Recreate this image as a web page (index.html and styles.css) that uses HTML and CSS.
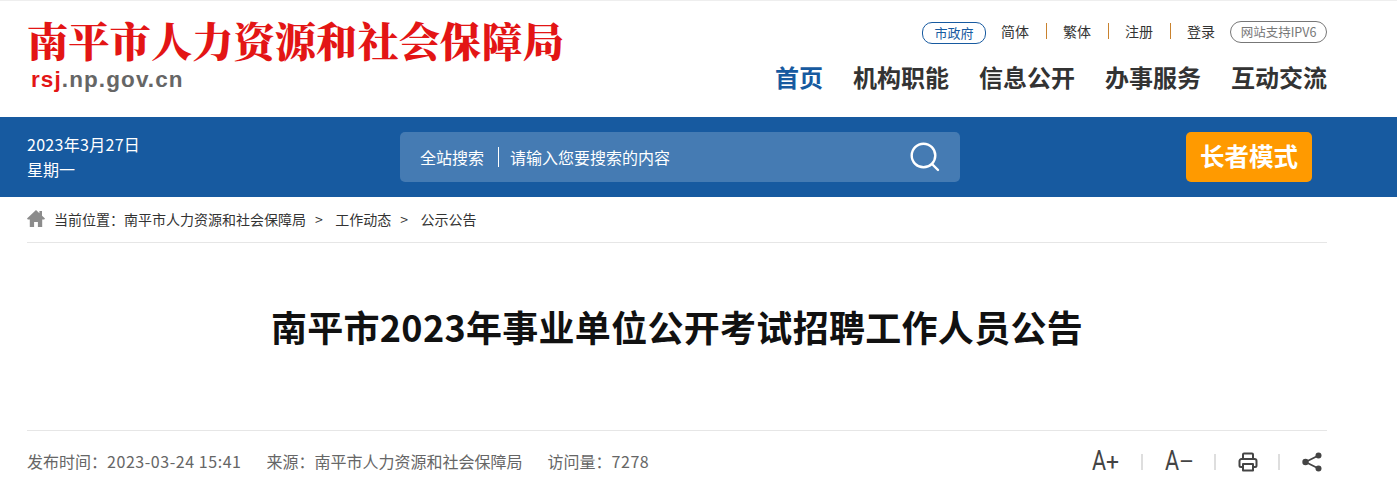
FILE: index.html
```html
<!DOCTYPE html>
<html lang="zh-CN">
<head>
<meta charset="utf-8">
<title>南平市2023年事业单位公开考试招聘工作人员公告</title>
<link rel="stylesheet" href="styles.css">
</head>
<body>
<header class="head wrap">
  <div class="logo">
    <div class="logo-cn">南平市人力资源和社会保障局</div>
    <div class="logo-en"><span class="red">rsj</span>.np.gov.cn</div>
  </div>
  <div class="head-right">
    <div class="tools">
      <a class="pill pill-blue">市政府</a>
      <a class="tool tool-line">简体</a>
      <a class="tool tool-line">繁体</a>
      <a class="tool tool-line">注册</a>
      <a class="tool">登录</a>
      <a class="pill pill-gray">网站支持IPV6</a>
    </div>
    <nav class="nav">
      <a class="active">首页</a>
      <a>机构职能</a>
      <a>信息公开</a>
      <a>办事服务</a>
      <a>互动交流</a>
    </nav>
  </div>
</header>
<section class="band">
  <div class="wrap band-in">
    <div class="date">
      <div class="date-line">2023年3月27日</div>
      <div>星期一</div>
    </div>
    <div class="search">
      <span class="search-label">全站搜索</span>
      <span class="search-hint">请输入您要搜索的内容</span>
      <svg class="search-icon" viewBox="0 0 30 30" width="30" height="30" fill="none" stroke="#fff" stroke-width="2.4" stroke-linecap="round"><circle cx="13.500" cy="13.500" r="11.800"/><path d="M22 22l6 6"/></svg>
    </div>
    <a class="elder">长者模式</a>
  </div>
</section>
<div class="wrap crumbs">
  <svg class="home" viewBox="0 0 18 17" width="18" height="17" fill="#8c8c8c"><path d="M9 0L0 8.600l.8.900h2V17h4.300v-5h3.800v5h4.300V9.500h2l.8-.9-3-2.900V1h-2.600v2.300z"/></svg>
  <span>当前位置：南平市人力资源和社会保障局</span>
  <span class="sep">&gt;</span>
  <span>工作动态</span>
  <span class="sep">&gt;</span>
  <span>公示公告</span>
</div>
<main class="wrap">
  <h1 class="title">南平市2023年事业单位公开考试招聘工作人员公告</h1>
  <div class="meta">
    <div class="meta-left">
      <span>发布时间：<span class="stamp">2023-03-24 15:41</span></span>
      <span>来源：南平市人力资源和社会保障局</span>
      <span>访问量：<span class="stamp">7278</span></span>
    </div>
    <div class="meta-right">
      <span class="fs"><b>A</b><small>+</small></span>
      <i class="bar"></i>
      <span class="fs"><b>A</b><small>–</small></span>
      <i class="bar"></i>
      <svg class="print" viewBox="0 0 20 20" width="20" height="20" fill="none" stroke="#444" stroke-width="2" stroke-linejoin="round"><path d="M5 7V2.500a1 1 0 0 1 1-1h8a1 1 0 0 1 1 1V7"/><path d="M5 15H3a1.500 1.500 0 0 1-1.500-1.500V9A2 2 0 0 1 3.500 7h13a2 2 0 0 1 2 2v4.500A1.500 1.500 0 0 1 17 15h-2"/><path d="M5 12h10v6.500H5z"/></svg>
      <i class="bar"></i>
      <svg class="share" viewBox="0 0 20 20" width="20" height="20" fill="#444"><circle cx="16.500" cy="3.500" r="3"/><circle cx="16.500" cy="16.500" r="3"/><circle cx="3.500" cy="10" r="3.200"/><path d="M3.500 10L16.500 3.500M3.500 10L16.500 16.500" stroke="#444" stroke-width="1.800"/></svg>
    </div>
  </div>
</main>
</body>
</html>
```
FILE: styles.css
```css
* { box-sizing: border-box; }
html, body { margin: 0; padding: 0; }
body {
  background: #fff;
  color: #333;
  font-family: "Noto Sans CJK SC", "Liberation Sans", sans-serif;
  border-top: 1px solid #eeeeee;
  overflow: hidden;
}
a { color: inherit; text-decoration: none; }
.wrap { width: 1300px; margin-left: 27px; }

.head { height: 116px; display: flex; justify-content: space-between; }
.logo { padding-top: 14px; }
.logo-cn {
  font-family: "Noto Serif CJK SC", "Noto Sans CJK SC", serif;
  font-size: 41.300px;
  font-weight: 900;
  line-height: 48px;
  color: #e31515;
  white-space: nowrap;
}
.logo-en {
  font-family: "Liberation Sans", sans-serif;
  font-weight: 700;
  font-size: 22.500px;
  letter-spacing: 1.100px;
  line-height: 26px;
  margin: 4px 0 0 4px;
  color: #666;
}
.red { color: #e31515; }

.head-right { display: flex; flex-direction: column; align-items: flex-end; }
.tools { display: flex; align-items: center; padding-top: 19px; height: 42px; font-size: 14px; color: #333; }
.pill { border-radius: 10px; font-size: 13px; line-height: 20px; height: 22px; text-align: center; }
.pill-blue { width: 64px; border: 1px solid #175aa0; color: #175aa0; margin: 3px 15px 0 0; }
.pill-gray { width: 97px; border: 1px solid #777; color: #777; margin-left: 15px; border-radius: 11px; font-size: 12.500px; white-space: nowrap; }
.tool { line-height: 16px; margin-top: -1px; }
.tool-line { padding-right: 17px; margin-right: 16px; border-right: 1px solid #c9822e; }
.tool:first-of-type { margin-left: 0; }
.nav { display: flex; gap: 30px; margin-top: 17px; font-size: 24px; font-weight: 700; line-height: 34px; color: #333; }
.nav .active { color: #175aa0; }

.band { height: 80px; background: #175aa0; }
.band-in { display: flex; align-items: center; height: 80px; position: relative; }
.date { width: 373px; color: #fff; font-size: 16px; line-height: 25px; }
.date-line { letter-spacing: 0.3px; }
.search {
  width: 560px;
  height: 50px;
  border-radius: 5px;
  background: rgba(255, 255, 255, 0.2);
  display: flex;
  align-items: center;
  padding: 0 20px;
  color: #fff;
  font-size: 16px;
}
.search-label { padding-right: 14px; margin-right: 11px; border-right: 1px solid #fff; line-height: 20px; }
.search-hint { flex: 1; }
.search-icon { display: block; }
.elder {
  width: 126px;
  height: 50px;
  margin-left: 226px;
  border-radius: 5px;
  background: #ff9a00;
  color: #fff;
  font-size: 24.500px;
  font-weight: 700;
  line-height: 48px;
  text-align: center;
}

.crumbs {
  height: 46px;
  display: flex;
  align-items: center;
  border-bottom: 1px solid #e6e6e6;
  font-size: 14px;
  line-height: 18px;
  padding-bottom: 2px;
  color: #333;
}
.home { margin-right: 9px; }
.sep { margin: 0 12.500px 0 9px; }

.title {
  margin: 0;
  padding: 58px 0 0;
  height: 188px;
  border-bottom: 1px solid #e6e6e6;
  font-size: 36px;
  letter-spacing: 0.300px;
  line-height: 50px;
  font-weight: 700;
  color: #111;
  text-align: center;
}
.meta { display: flex; justify-content: space-between; align-items: center; height: 62px; color: #666; font-size: 16px; }
.meta-left { display: flex; gap: 25px; line-height: 24px; padding-bottom: 2px; }
.stamp { letter-spacing: 0.550px; }
.meta-right { display: flex; align-items: center; gap: 22px; color: #444; padding-right: 5px; }
.fs { display: flex; align-items: baseline; font-family: "Roboto", "Liberation Sans", sans-serif; line-height: 30px; width: 27px; white-space: nowrap; }
.fs b { display: inline-block; width: 14px; font-size: 27px; font-weight: 400; transform: scaleX(0.8); transform-origin: left; }
.fs small { font-size: 23px; }
.bar { width: 2px; height: 16px; background: #dedede; }
.print { margin-right: -2px; }
```
